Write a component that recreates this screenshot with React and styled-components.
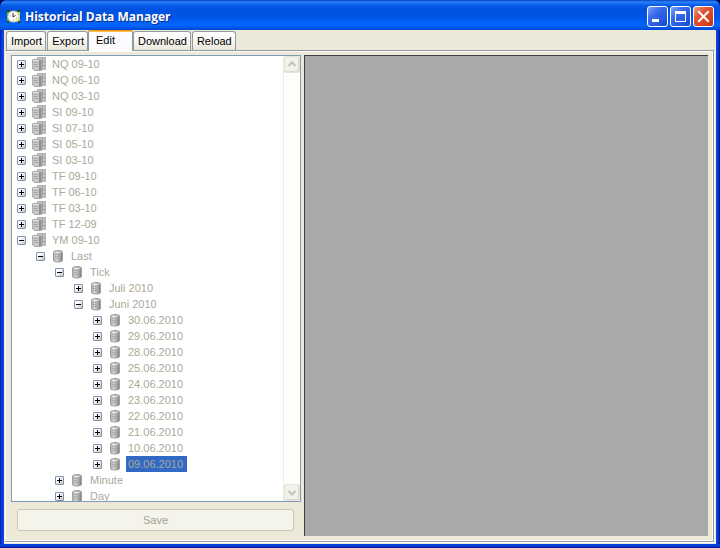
import React, { useState } from 'react';
import styled, { createGlobalStyle } from 'styled-components';

const GlobalStyle = createGlobalStyle`
    * {
        box-sizing: border-box;
    }
    body {
        margin: 0;
        background: #000a5c;
        font-family: "Liberation Sans", Arial, sans-serif;
        font-size: 11px;
        color: #000;
    }
    button {
        font: inherit;
        color: inherit;
        padding: 0;
    }
    ul {
        list-style: none;
        margin: 0;
        padding: 0;
    }
`;

const WindowContainer = styled.div`
    display: flex;
    flex-direction: column;
    height: 100vh;
    border-radius: 7px 7px 0 0;
    background: linear-gradient(to right, #0019a8 0, #0a3fe0 2px, #0a4ae8 4px, #0a4ae8 calc(100% - 4px), #0838d6 calc(100% - 2px), #00138c 100%);
    overflow: hidden;
`;

const TitleBar = styled.header`
    display: flex;
    align-items: center;
    gap: 4px;
    flex: none;
    height: 30px;
    padding: 3px 6px 0;
    background: linear-gradient(to bottom, #0a3fc8 0, #2b83f8 2px, #0a5ce8 5px, #0052e0 9px, #0054e6 17px, #0263fb 23px, #0263fb 26px, #0046d0 100%);

    .title {
        flex: 1;
        margin: 0;
        padding-top: 1px;
        color: #fff;
        font-family: "Open Sans", "Noto Sans", sans-serif;
        font-size: 12px;
        font-weight: 700;
        line-height: 16px;
        text-shadow: 1px 1px #0a2d8c;
    }
    .controls {
        display: flex;
        gap: 2px;
    }
`;

const CaptionButton = styled.button`
    width: 21px;
    height: 21px;
    border: 1px solid #fff;
    border-radius: 3px;
    background: ${({ $close }) => ($close
        ? 'linear-gradient(135deg, #f0a088 0, #e0553a 35%, #d8401c 75%, #b83010 100%)'
        : 'linear-gradient(135deg, #7ea4f8 0, #3a6cea 35%, #2258dc 75%, #1a48c0 100%)')};

    svg {
        display: block;
    }
`;

const Content = styled.main`
    display: flex;
    flex: 1;
    flex-direction: column;
    min-height: 0;
    margin: 0 4px;
    padding: 0 2px 2px 1px;
    background: #ece9d8;
`;

const TabList = styled.div`
    display: flex;
    align-items: flex-end;
    gap: 1px;
    flex: none;
    height: 21px;
    padding-left: 1px;
    margin-bottom: -1px;
`;

const Tab = styled.button`
    position: relative;
    height: ${({ $active }) => ($active ? 21 : 19)}px;
    margin: ${({ $active }) => ($active ? '0 -1px' : '0 0 1px')};
    padding: ${({ $active }) => ($active ? '0 17px 2px 7px' : '0 3px 0 4px')};
    border: 1px solid #919b9c;
    border-top-color: ${({ $active }) => ($active ? '#e8962e' : '#919b9c')};
    border-bottom: none;
    border-radius: ${({ $active }) => ($active ? '2px 2px 0 0' : '3px 3px 0 0')};
    background: ${({ $active }) => ($active ? '#fcfcfe' : 'linear-gradient(#fff, #f6f5f0 60%, #e8e6da)')};
    box-shadow: ${({ $active }) => ($active ? 'inset 0 1px #ffc03c' : 'none')};
`;

const TabPanel = styled.section`
    display: flex;
    flex: 1;
    gap: 3px;
    min-height: 0;
    padding: 4px 5px 5px;
    border: 1px solid #919b9c;
    border-left-color: #fcfcfe;
    background: #ece9d8;
    box-shadow: inset 0 1px #fcfcfe, inset -1px -1px #fcfcfe, 1px 1px #fcfcfe;
`;

const SidePane = styled.div`
    display: flex;
    flex-direction: column;
    width: 290px;
    flex: none;
`;

const TreeBox = styled.div`
    display: flex;
    flex: 1;
    min-height: 0;
    border: 1px solid #7f9db9;
    background: #fff;

    .tree {
        flex: 1;
        overflow: hidden;
        padding-left: 5px;
    }
`;

const Row = styled.div`
    display: flex;
    align-items: center;
    height: 16px;
    padding-left: ${({ $level }) => $level * 19}px;
    color: #aca899;

    svg {
        flex: none;
        margin: 0 3px 0 5px;
    }
    .label {
        padding: 0 4px 0 2px;
        line-height: 16px;
        white-space: nowrap;
        background: ${({ $selected }) => ($selected ? '#316ac5' : 'transparent')};
    }
`;

const Toggle = styled.button`
    display: flex;
    flex: none;
    width: 9px;
    height: 9px;
    border: 1px solid #7b94b4;
    border-radius: 1px;
    background: linear-gradient(135deg, #fff 30%, #c8c2b4);

    svg {
        margin: 0;
    }
`;

const Scrollbar = styled.div`
    display: flex;
    flex: none;
    flex-direction: column;
    justify-content: space-between;
    width: 17px;
    border-left: 1px solid #eeede5;
    background: #fefefb;
`;

const ScrollButton = styled.button`
    width: 16px;
    height: 17px;
    border: 1px solid #e4e3da;
    border-radius: 2px;
    background: #f3f2ea;
    box-shadow: inset -1px -1px #dddbd0;

    svg {
        display: block;
    }
`;

const Actions = styled.div`
    flex: none;
    padding: 7px 7px 5px 6px;
`;

const SaveButton = styled.button`
    display: block;
    width: 100%;
    height: 22px;
    border: 1px solid #c9c7ba;
    border-radius: 3px;
    background: #f5f4ea;
    color: #a1a192;
`;

const ChartPane = styled.div`
    flex: 1;
    border-top: 1px solid #404040;
    border-left: 1px solid #404040;
    background: #a9a9a9;
`;

const BottomEdge = styled.div`
    flex: none;
    height: 4px;
    background: linear-gradient(#0a45e4, #0a3ad8 50%, #00138c);
`;

const days = ['30', '29', '28', '25', '24', '23', '22', '21', '10', '09'];

const nodes = [
    ...['NQ 09-10', 'NQ 06-10', 'NQ 03-10', 'SI 09-10', 'SI 07-10', 'SI 05-10', 'SI 03-10',
        'TF 09-10', 'TF 06-10', 'TF 03-10', 'TF 12-09'].map(text => ({ text })),
    {
        text: 'YM 09-10',
        children: [{
            text: 'Last',
            children: [
                {
                    text: 'Tick',
                    children: [
                        { text: 'Juli 2010' },
                        { text: 'Juni 2010', children: days.map(day => ({ text: `${day}.06.2010` })) },
                    ],
                },
                { text: 'Minute' },
                { text: 'Day' },
            ],
        }],
    },
];

const tabs = ['Import', 'Export', 'Edit', 'Download', 'Reload'];

const ClockIcon = () => (
    <svg width="15" height="16" viewBox="0 0 15 16" aria-hidden="true">
        <path d="M1 2h4v11H1z" fill="#58b848" />
        <path d="M10 2h4v11h-4z" fill="#c0e040" />
        <path d="M1 1h3v2H1zM11 1h3v2h-3zM1 12h2v2H1zM12 12h2v2h-2z" fill="#304828" />
        <circle cx="7.5" cy="7.5" r="5.5" fill="#fcfcf8" stroke="#c4c8b4" />
        <path d="M7 4v4L9.500 6.500" fill="none" stroke="#303030" />
        <path d="M7 11h1M10 9h1M4 7h1" stroke="#90a080" />
    </svg>
);

const DatabaseIcon = () => (
    <svg width="16" height="16" viewBox="0 0 16 16" aria-hidden="true">
        <defs>
            <linearGradient id="drum">
                <stop offset="0" stopColor="#a8a8a8" />
                <stop offset="0.35" stopColor="#d6d6d6" />
                <stop offset="1" stopColor="#7c7c7c" />
            </linearGradient>
        </defs>
        <path d="M3.500 4C3.500 2 12.500 2 12.500 4V12.500C12.500 14.500 3.500 14.500 3.500 12.500Z" fill="url(#drum)" stroke="#a0a0a0" />
        <path d="M4.500 4Q8 5.300 11.500 4" fill="none" stroke="#e4e4e4" />
        <path d="M5 6.500h4M5 8.500h4M5 10.500h4" stroke="#aaa" />
    </svg>
);

const InstrumentIcon = () => (
    <svg width="16" height="16" viewBox="0 0 16 16" aria-hidden="true">
        <path d="M6.500 1.500h8v12h-8z" fill="#c4c4c4" stroke="#b0b0b0" />
        <path d="M11.500 2v11M12 5.500h2M12 9.500h2" stroke="#a0a0a0" />
        <path d="M1.500 4Q5.500 2 10.500 4V14.500H4L1.500 13Z" fill="#c8c8c8" stroke="#aaa" />
        <path d="M9 4v10" stroke="#909090" strokeWidth="2" />
        <path d="M3 6.500h4M3 8.500h4M3 10.500h4" stroke="#aaa" />
        <path d="M3 4.500h5" stroke="#e2e2e2" />
    </svg>
);

const TreeNode = ({ node, level }) => {
    const [open, setOpen] = useState(Boolean(node.children));
    const selected = node.text === '09.06.2010';

    return (
        <li role="treeitem" aria-expanded={open} aria-selected={selected}>
            <Row $level={level} $selected={selected}>
                <Toggle type="button" aria-label={`Toggle ${node.text}`} onClick={() => setOpen(!open)}>
                    <svg width="7" height="7" viewBox="0 0 7 7">
                        <path d={open ? 'M1 3.5h5' : 'M1 3.5h5M3.5 1v5'} stroke="#000" />
                    </svg>
                </Toggle>
                {level === 0 ? <InstrumentIcon /> : <DatabaseIcon />}
                <span className='label'>{node.text}</span>
            </Row>
            {open && node.children && (
                <ul role="group">
                    {node.children.map(item => <TreeNode key={item.text} node={item} level={level + 1} />)}
                </ul>
            )}
        </li>
    );
};

const App = () => {
    const [active, setActive] = useState('Edit');

    return (
        <WindowContainer>
            <GlobalStyle />
            <TitleBar>
                <ClockIcon />
                <h1 className='title'>Historical Data Manager</h1>
                <div className='controls'>
                    <CaptionButton type="button" aria-label="Minimize">
                        <svg width="19" height="19"><path d="M4 13.500h7" stroke="#fff" strokeWidth="3" /></svg>
                    </CaptionButton>
                    <CaptionButton type="button" aria-label="Maximize">
                        <svg width="19" height="19">
                            <path d="M4.500 5v9.500h10V5" fill="none" stroke="#fff" />
                            <path d="M4 5.500h11" stroke="#fff" strokeWidth="3" />
                        </svg>
                    </CaptionButton>
                    <CaptionButton type="button" aria-label="Close" $close>
                        <svg width="19" height="19"><path d="M5 5l9 9M14 5l-9 9" stroke="#fff" strokeWidth="2" strokeLinecap="square" /></svg>
                    </CaptionButton>
                </div>
            </TitleBar>
            <Content>
                <TabList role="tablist">
                    {tabs.map(tab => (
                        <Tab key={tab} type="button" role="tab" aria-selected={tab === active} $active={tab === active} onClick={() => setActive(tab)}>
                            {tab}
                        </Tab>
                    ))}
                </TabList>
                <TabPanel role="tabpanel">
                    <SidePane>
                        <TreeBox>
                            <ul className='tree' role="tree">
                                {nodes.map(item => <TreeNode key={item.text} node={item} level={0} />)}
                            </ul>
                            <Scrollbar>
                                <ScrollButton type="button" aria-label="Scroll up" disabled>
                                    <svg width="14" height="15"><path d="M3.500 9L7 5.500L10.500 9" fill="none" stroke="#c4c2b6" strokeWidth="2" /></svg>
                                </ScrollButton>
                                <ScrollButton type="button" aria-label="Scroll down" disabled>
                                    <svg width="14" height="15"><path d="M3.500 6L7 9.500L10.500 6" fill="none" stroke="#c4c2b6" strokeWidth="2" /></svg>
                                </ScrollButton>
                            </Scrollbar>
                        </TreeBox>
                        <Actions>
                            <SaveButton type="button" disabled>Save</SaveButton>
                        </Actions>
                    </SidePane>
                    <ChartPane />
                </TabPanel>
            </Content>
            <BottomEdge />
        </WindowContainer>
    );
};

export default App;
